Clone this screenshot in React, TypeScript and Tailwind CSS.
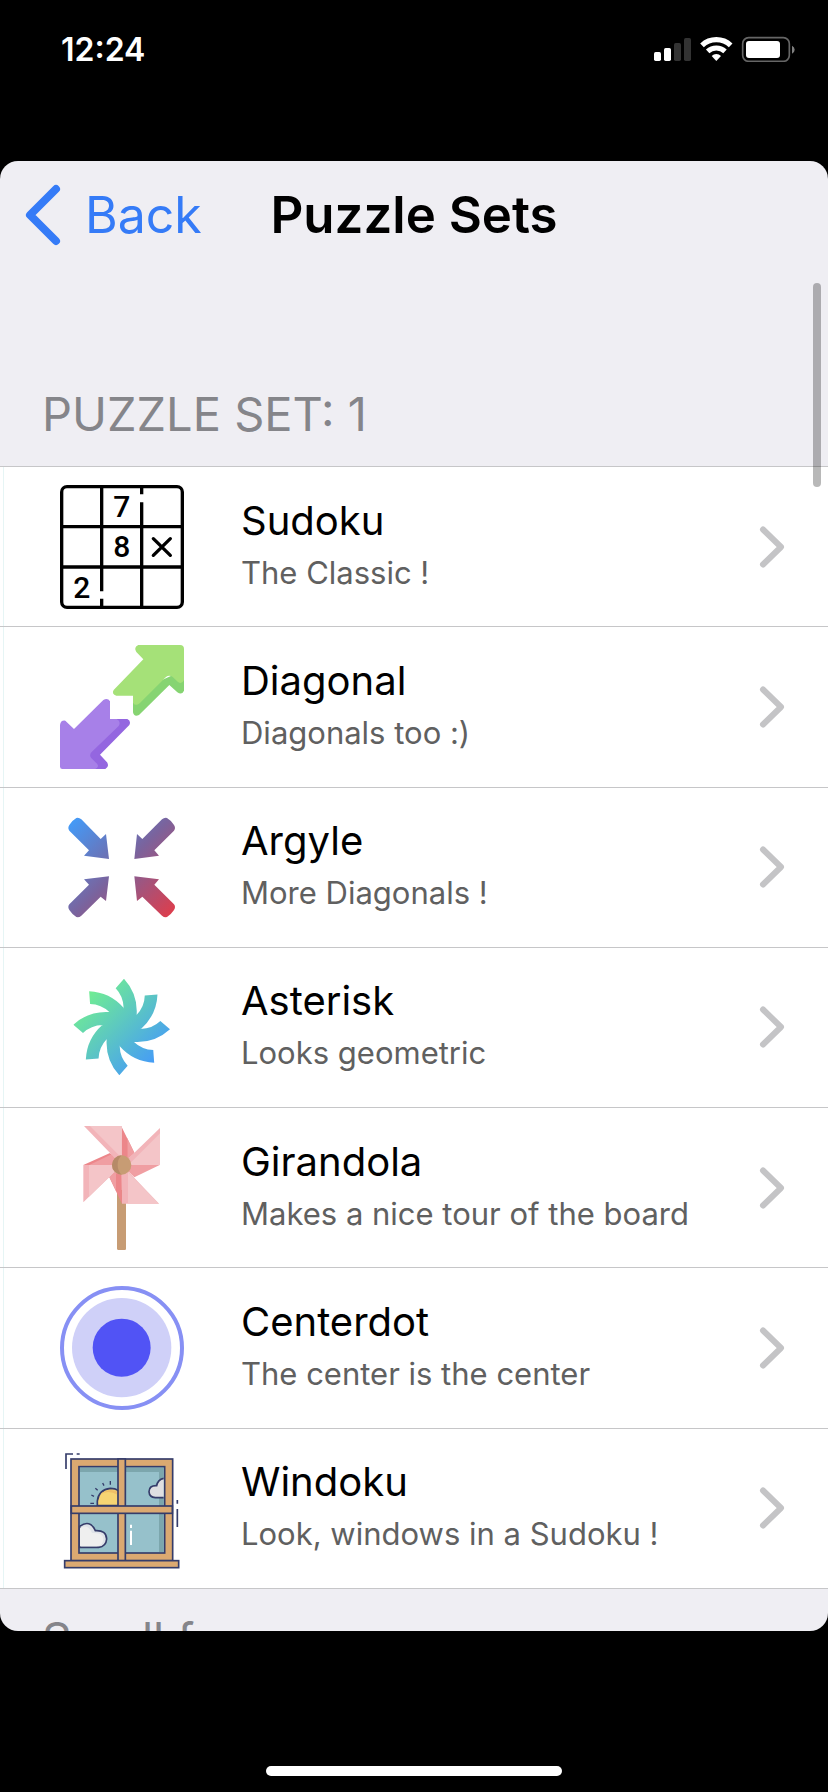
import React from 'react';

interface PuzzleType {
  name: string;
  description: string;
  icon: React.ReactNode;
}

const iconClass = 'size-[124px] shrink-0';

const SudokuIcon = () => (
  <svg viewBox="60 45 372 372" className={iconClass} fill="none" stroke="#000" strokeWidth="10" strokeLinecap="round">
    <rect x="65" y="50" width="362" height="362" rx="16" />
    <path d="M65 170H427M65 291H427M185 50V364M185 386V412M305 50V73M305 97V412" strokeLinecap="butt" />
    <path d="M340 206L391 256M391 206L340 256" />
    <g fill="#000" stroke="none" fontFamily="Roboto, sans-serif" fontSize="90" fontWeight="500" textAnchor="middle">
      <text x="245" y="141">7</text>
      <text x="245" y="262">8</text>
      <text x="125" y="383">2</text>
    </g>
  </svg>
);

const DiagonalIcon = () => (
  <svg viewBox="60 45 372 372" className={iconClass} strokeLinejoin="round">
    <path d="M279 190V247Q282 262 297 255L388 165L412 187Q426 196 432 182V120Z" fill="#86d472" />
    <path d="M295 45H420Q432 45 432 57V150Q426 164 414 156L398 141Q388 133 378 141L299 220Q286 230 279 218V197H229Q214 192 221 180L310 88L289 66Q280 52 295 45Z" fill="#a5e178" />
    <path d="M200 267H262Q274 273 268 285L180 374L201 397Q209 409 196 417H150L140 370Z" fill="#9466e0" />
    <path d="M60 285Q62 270 76 272L102 297L190 210Q203 202 210 214V267H230Q244 275 236 288L155 366Q147 374 153 383L171 401Q179 411 166 417H67Q60 417 60 410Z" fill="#a780e8" />
  </svg>
);

const ArgyleIcon = () => (
  <svg viewBox="60 45 372 372" className={iconClass}>
    <defs>
      <linearGradient id="argyle" gradientUnits="userSpaceOnUse" x1="96" y1="84" x2="394" y2="380">
        <stop offset="0" stopColor="#429cfa" />
        <stop offset="0.5" stopColor="#7a639d" />
        <stop offset="1" stopColor="#df3d4b" />
      </linearGradient>
    </defs>
    <g fill="url(#argyle)">
      <path d="M207 207L132 197L147 181L88 122Q82 114 88 105Q98 90 109 84Q117 82 124 88L182 147L198 132Z" />
      <path d="M283 207L357 197L343 181L402 122Q408 114 402 105Q392 90 381 84Q373 82 366 88L307 147L291 132Z" />
      <path d="M207 259L132 268L147 284L88 343Q82 351 88 360Q98 375 109 381Q117 383 124 377L182 320L198 333Z" />
      <path d="M283 259L357 268L343 284L402 343Q408 351 402 360Q392 375 381 381Q373 383 366 377L307 320L291 333Z" />
    </g>
  </svg>
);

const arm = 'M252 59Q294 105 290 167L246 206L243 204L251 147Q250 112 227 88Z';

const AsteriskIcon = () => (
  <svg viewBox="60 18 372 372" className={iconClass}>
    <defs>
      <linearGradient id="asterisk" gradientUnits="userSpaceOnUse" x1="145" y1="104" x2="345" y2="304">
        <stop offset="0" stopColor="#70ec94" />
        <stop offset="1" stopColor="#469df5" />
      </linearGradient>
      <clipPath id="arms">
        {[0, 45, 90, 135, 180, 225, 270, 315].map((angle) => (
          <path key={angle} d={arm} transform={`rotate(${angle} 245 204)`} />
        ))}
        <circle cx="245" cy="204" r="56" />
      </clipPath>
    </defs>
    <rect x="90" y="50" width="310" height="310" fill="url(#asterisk)" clipPath="url(#arms)" />
  </svg>
);

const GirandolaIcon = () => (
  <svg viewBox="60 33 372 372" className={iconClass}>
    <path d="M231 225H258V400Q257 408 250 408H239Q232 407 231 400Z" fill="#c79c74" />
    <path d="M245 36L283 113L245 150ZM130 150L210 114L245 150ZM246 266L208 187L245 150Z" fill="#ec868a" />
    <path d="M262 70L283 113L245 150H262ZM148 150L215 118L245 150ZM228 228L208 187L245 150V180L228 175ZM359 150L283 187L245 150Z" fill="#f09ea2" />
    <path d="M245 70L262 70V130L245 150Z" fill="#ec868a" />
    <path d="M132 33H245V150ZM360 39V150H245ZM357 266H246V150ZM130 262V150H245Z" fill="#f2b4b9" />
    <path d="M150 33H245V129ZM360 55V150H265ZM357 266H264V172ZM147 245V150H245Z" fill="#f4c5c8" />
    <circle cx="245" cy="150" r="29" fill="#c79c74" />
    <path d="M245 121A29 29 0 0 0 245 179Q233 168 233 150T245 121Z" fill="#b68a68" />
  </svg>
);

const CenterdotIcon = () => (
  <svg viewBox="60 36 372 372" className={iconClass}>
    <circle cx="246" cy="222" r="180" fill="none" stroke="#8790f4" strokeWidth="12" />
    <circle cx="245" cy="221" r="149" fill="#cfd0f8" />
    <circle cx="245" cy="221" r="87" fill="#5153f5" />
  </svg>
);

const WindokuIcon = () => (
  <svg viewBox="60 21 372 372" className={iconClass} stroke="#353c6a" strokeWidth="5">
    <path d="M78 90V45H99M110 45H119M412 183V194M412 210V264" fill="none" />
    <rect x="93" y="60" width="305" height="305" fill="#dba971" />
    <rect x="117" y="83" width="257" height="259" fill="#96c1cb" />
    <path d="M120 86H371V339H357V99H120Z" fill="#7ca6ad" stroke="none" />
    <path d="M172 200V186Q176 152 211 148Q225 148 236 155V200Z" fill="#f6d473" />
    <path d="M180 167Q205 145 234 158V168Q204 151 180 167Z" fill="#efbf67" stroke="none" />
    <path d="M151 193H162M154 168L162 172M166 148L173 154M188 132L192 140M211 126V137" fill="none" strokeWidth="4" />
    <path d="M371 118Q353 122 350 140Q327 139 327 158Q328 175 346 176H371" fill="#dfdfe2" />
    <path d="M119 262Q150 240 166 275Q199 273 200 300Q198 323 176 325H119Z" fill="#dfe3e8" />
    <path d="M120 268Q144 252 156 282Q190 279 190 301Q188 321 170 322H120Z" fill="#efefef" stroke="none" />
    <path d="M273 257V267M273 275V318" stroke="#fff" strokeWidth="6" />
    <rect x="234" y="60" width="22" height="305" fill="#dba971" />
    <rect x="94" y="201" width="303" height="22" fill="#dba971" />
    <rect x="74" y="365" width="342" height="21" fill="#dba971" />
  </svg>
);

const puzzles: PuzzleType[] = [
  { name: 'Sudoku', description: 'The Classic !', icon: <SudokuIcon /> },
  { name: 'Diagonal', description: 'Diagonals too :)', icon: <DiagonalIcon /> },
  { name: 'Argyle', description: 'More Diagonals !', icon: <ArgyleIcon /> },
  { name: 'Asterisk', description: 'Looks geometric', icon: <AsteriskIcon /> },
  { name: 'Girandola', description: 'Makes a nice tour of the board', icon: <GirandolaIcon /> },
  { name: 'Centerdot', description: 'The center is the center', icon: <CenterdotIcon /> },
  { name: 'Windoku', description: 'Look, windows in a Sudoku !', icon: <WindokuIcon /> },
];

const StatusBar: React.FC = () => (
  <div className="flex h-[161px] shrink-0 items-start justify-between pt-[30px] pr-8 pl-[61px] text-white">
    <span className="text-[32px] leading-10 font-semibold">12:24</span>
    <svg viewBox="69 48 426 78" className="mt-[6px] h-[26px] w-[142px]" fill="none">
      <rect x="69" y="96" width="21" height="27" rx="5" fill="#fff" />
      <rect x="99" y="84" width="21" height="39" rx="5" fill="#fff" />
      <rect x="129" y="69" width="21" height="54" rx="5" fill="#333" />
      <rect x="159" y="54" width="21" height="69" rx="5" fill="#333" />
      <path d="M213 76A63 63 0 0 1 299 76" stroke="#fff" strokeWidth="16" />
      <path d="M230 94A38 38 0 0 1 282 94" stroke="#fff" strokeWidth="15" />
      <path d="M256 123L242 108A20 20 0 0 1 270 108Z" fill="#fff" />
      <rect x="335" y="53" width="140" height="71" rx="18" stroke="#666" strokeWidth="5" />
      <rect x="345" y="63" width="102" height="51" rx="9" fill="#fff" />
      <path d="M483 77Q491 81 491 89T483 101Z" fill="#808080" />
    </svg>
  </div>
);

const PuzzleRow: React.FC<{ puzzle: PuzzleType }> = ({ puzzle }) => (
  <li className="flex flex-1 border-b border-[#c6c6c8] pl-[3px]">
    <a href="#" className="flex flex-1 items-center border-l border-[#e6f5f5] pr-[43px] pl-[56px]">
      {puzzle.icon}
      <div className="ml-[57px] flex-1 pb-1">
        <h3 className="text-[40px] leading-[52px] text-black">{puzzle.name}</h3>
        <p className="mt-1 text-[31px] leading-[44px] text-[#606060]">{puzzle.description}</p>
      </div>
      <svg viewBox="0 0 26 42" className="h-[42px] w-[26px]" fill="none" stroke="#c4c4c6" strokeWidth="6" strokeLinecap="round" strokeLinejoin="round">
        <path d="M4 3.5L22 21L4 38.5" />
      </svg>
    </a>
  </li>
);

const App: React.FC = () => {
  return (
    <div className="flex h-screen min-h-[1200px] flex-col bg-black font-['Inter',sans-serif]">
      <StatusBar />

      <main className="relative flex min-h-0 flex-1 flex-col overflow-hidden rounded-[18px] bg-[#efeef3]">
        <header className="grid h-[108px] shrink-0 grid-cols-[1fr_auto_1fr] items-center px-6">
          <button type="button" className="flex items-center gap-6 text-[50px] leading-[60px] text-[#357bf7]">
            <svg viewBox="0 0 37 62" className="h-[62px] w-[37px]" fill="none" stroke="currentColor" strokeWidth="8" strokeLinecap="round" strokeLinejoin="round">
              <path d="M32 5L6 31L32 57" />
            </svg>
            Back
          </button>
          <h1 className="text-[51px] leading-[60px] font-semibold text-black">Puzzle Sets</h1>
        </header>

        <h2 className="mt-[115px] shrink-0 pb-[22px] pl-[42px] text-[47px] leading-[60px] text-[#85858a] uppercase">Puzzle Set: 1</h2>

        <ul className="flex flex-1 flex-col border-t border-[#c6c6c8] bg-white">
          {puzzles.map((puzzle) => (
            <PuzzleRow key={puzzle.name} puzzle={puzzle} />
          ))}
        </ul>

        <p className="h-[42px] shrink-0 overflow-hidden pt-[24px] pl-[42px] text-[46px] leading-[52px] text-[#85858a]">
          Scroll f
        </p>

        <div className="absolute top-[122px] right-[7px] h-[204px] w-2 rounded-full bg-black/28" />
      </main>

      <footer className="flex h-[161px] shrink-0 items-end justify-center pb-4">
        <div className="h-[10px] w-[296px] rounded-full bg-white" />
      </footer>
    </div>
  );
};

export default App;
